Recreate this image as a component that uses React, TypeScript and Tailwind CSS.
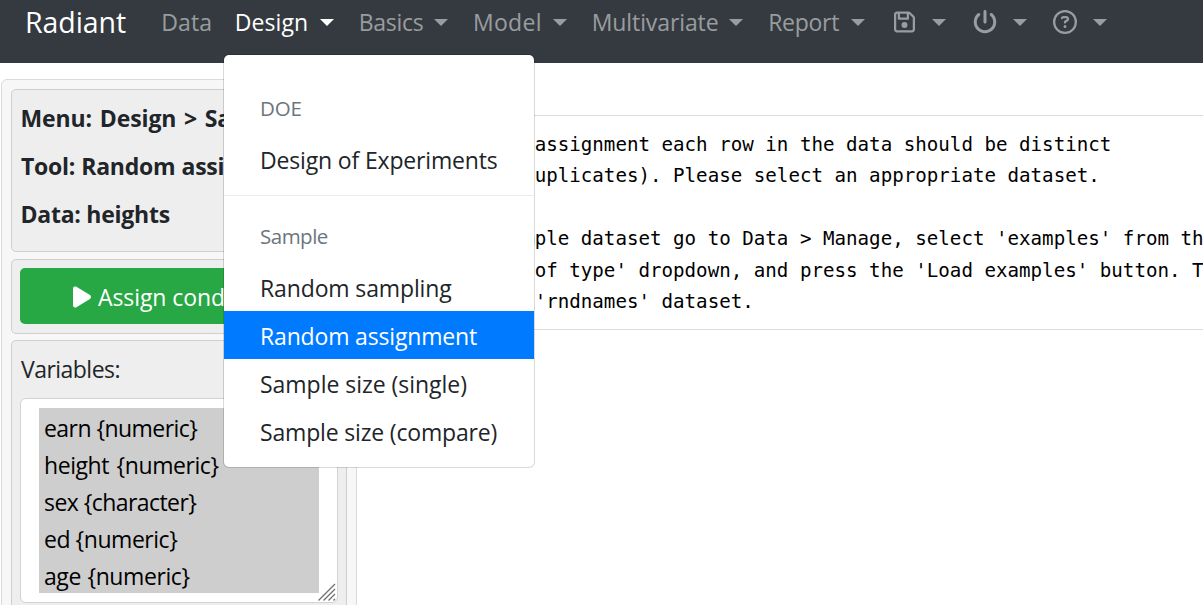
import type { ReactNode } from "react";
import { FaPlay, FaPowerOff, FaRegCircleQuestion, FaRegFloppyDisk } from "react-icons/fa6";

function Caret() {
  return (
    <svg className="ml-auto h-[7px] w-[14px] shrink-0" viewBox="0 0 14 7" fill="currentColor">
      <path d="M0 0H14L7 7Z" />
    </svg>
  );
}

function NavItem({ className, caret = true, children }: { className: string; caret?: boolean; children: ReactNode }) {
  return (
    <div className={`flex h-[44px] shrink-0 items-center pr-6 whitespace-nowrap ${className}`}>
      {children}
      {caret && <Caret />}
    </div>
  );
}

function Navbar() {
  return (
    <nav className="flex h-[63px] items-start bg-[#343a40] pl-6 text-white/50">
      <div className="flex h-[44px] w-[136.3px] shrink-0 items-center pl-px text-[28.5px] tracking-[-0.06px] text-white">Radiant</div>
      <NavItem className="w-[73.4px] pl-px tracking-[0.1px]" caret={false}>Data</NavItem>
      <NavItem className="w-[124.1px] pl-px tracking-[0.1px] text-white">Design</NavItem>
      <NavItem className="w-[114.1px] pl-px tracking-[-0.28px]">Basics</NavItem>
      <NavItem className="w-[118.9px] pl-px tracking-[0.35px]">Model</NavItem>
      <NavItem className="w-[176.4px] pl-px tracking-[-0.1px]">Multivariate</NavItem>
      <NavItem className="w-[122.1px] pl-px tracking-[-0.28px]">Report</NavItem>
      <NavItem className="w-[80.7px] pl-[4.5px]"><FaRegFloppyDisk className="h-6 w-[21px]" /></NavItem>
      <NavItem className="w-[81px] pl-[3px]"><FaPowerOff className="size-6" /></NavItem>
      <NavItem className="w-[80px] pl-[2.5px]"><FaRegCircleQuestion className="size-6" /></NavItem>
    </nav>
  );
}

function DesignMenu() {
  const item = "flex h-12 items-center pl-9 whitespace-nowrap";
  const header = "flex items-center pt-[13px] pl-9 text-[20.5px] text-[#6c757d]";
  return (
    <div className="absolute top-[54px] left-[223px] w-[312px] rounded-md border border-black/15 bg-white bg-clip-padding py-3">
      <div className={`h-[69px] tracking-[-0.1px] ${header}`}>DOE</div>
      <div className={`pt-px tracking-[-0.16px] ${item}`}>Design of Experiments</div>
      <div className="mt-[11px] h-px bg-[#e9ecef]" />
      <div className={`h-[67px] tracking-[-0.5px] ${header}`}>Sample</div>
      <div className={`pt-[2px] tracking-[-0.13px] ${item}`}>Random sampling</div>
      <div className={`bg-[#007bff] pt-[2px] tracking-[-0.17px] text-white ${item}`}>Random assignment</div>
      <div className={`pt-[2px] tracking-[-0.03px] ${item}`}>Sample size (single)</div>
      <div className={`pt-[2px] tracking-[-0.17px] ${item}`}>Sample size (compare)</div>
    </div>
  );
}

function Well({ className, children }: { className: string; children: ReactNode }) {
  return <div className={`shrink-0 rounded-[5px] border border-[#cfcfcf] bg-[#eeeeee] ${className}`}>{children}</div>;
}

function Sidebar() {
  return (
    <aside className="mt-4 ml-px flex h-[640px] w-[356px] shrink-0 flex-col rounded-md border border-[#dadada] bg-[#f7f7f7] p-[9px]">
      <Well className="flex h-[163px] flex-col gap-3 overflow-hidden pt-[10px] pl-[8px] leading-9 font-bold whitespace-nowrap">
        <div className="pl-[0.5px] tracking-[-0.1px] [word-spacing:1.8px]">Menu: Design &gt; Sample</div>
        <div className="pl-px tracking-[-0.26px] [word-spacing:0.5px]">Tool: Random assignment</div>
        <div className="pl-[0.5px] tracking-[-0.25px]">Data: heights</div>
      </Well>
      <Well className="mt-[7px] h-[75px] p-2">
        <div className="flex h-14 items-center rounded-[5px] bg-[#28a745] pl-[53px] text-white">
          <FaPlay className="mt-[2px] h-6 w-[18px]" />
          <span className="mt-[3px] ml-[7px] tracking-[-0.08px] whitespace-nowrap">Assign conditions</span>
        </div>
      </Well>
      <Well className="mt-[6px] h-[400px] px-2 pt-[10px]">
        <div className="pl-px leading-9 tracking-[-0.53px]">Variables:</div>
        <div className="relative mt-[11px] rounded-[6px] border border-[#ced4da] bg-white px-[18px] py-[9px] text-black">
          <div className="bg-[#cecece] pl-[5px] leading-[37px]">
            <div className="h-[37px] pt-[2px] tracking-[-0.55px]">earn {"{numeric}"}</div>
            <div className="h-[37px] pt-[2px] tracking-[-0.43px] [word-spacing:2px]">height {"{numeric}"}</div>
            <div className="h-[37px] pt-[2px] tracking-[-0.56px]">sex {"{character}"}</div>
            <div className="h-[37px] pt-[2px] tracking-[-0.46px]">ed {"{numeric}"}</div>
            <div className="h-[37px] pt-[2px] tracking-[-0.42px] [word-spacing:1px]">age {"{numeric}"}</div>
          </div>
          <svg className="absolute right-px bottom-px size-[18px]" viewBox="0 0 18 18" fill="none" stroke="#70706f" strokeWidth="1.3">
            <path d="M0.5 17.5L17 1M5.5 17.5L17 6M10.5 17.5L17 11M15.5 17.5L17 16" />
          </svg>
        </div>
      </Well>
    </aside>
  );
}

const message = `For random assignment each row in the data should be distinct
(i.e., no duplicates). Please select an appropriate dataset.

For an example dataset go to Data > Manage, select 'examples' from the
'Load data of type' dropdown, and press the 'Load examples' button. Then
select the 'rndnames' dataset.`;

export default function App() {
  return (
    <div className="relative h-[605px] w-[1203px] overflow-hidden bg-white font-['Open_Sans','Noto_Sans',sans-serif] text-[23px] text-[#212529]">
      <Navbar />
      <div className="flex">
        <Sidebar />
        <main className="mt-[52px] ml-[36px] shrink-0">
          <pre className="h-[215px] w-[900px] border border-[#dddddd] pt-[12.6px] pl-[13.8px] font-['DejaVu_Sans_Mono',monospace] text-[19.16px] leading-[31.5px] text-black">{message}</pre>
        </main>
      </div>
      <DesignMenu />
    </div>
  );
}
